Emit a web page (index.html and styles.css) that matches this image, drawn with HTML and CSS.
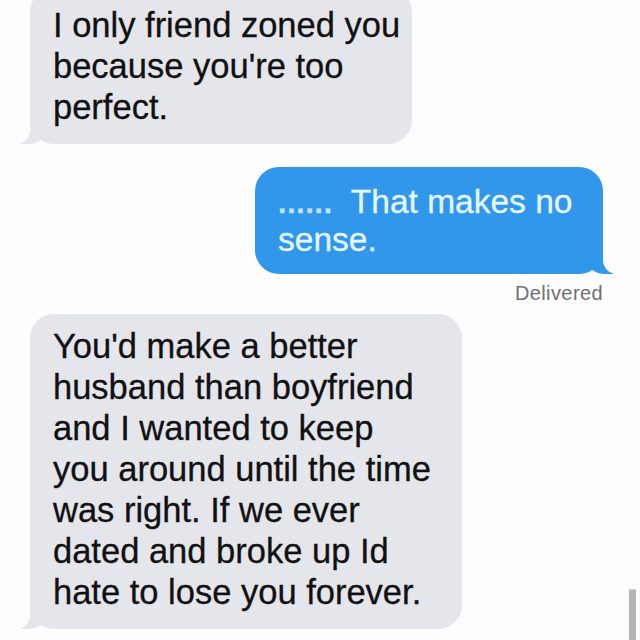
FILE: index.html
```html
<!DOCTYPE html>
<html lang="en">
<head>
<meta charset="utf-8">
<title>Messages</title>
<link rel="stylesheet" href="styles.css">
</head>
<body>
<div class="thread">
  <div class="bubble them first">I only friend zoned you because you're too perfect.</div>
  <div class="bubble me"><span class="dots">......</span><span class="msg">That makes no sense.</span></div>
  <div class="status">Delivered</div>
  <div class="bubble them wide">You'd make a better husband than boyfriend and I wanted to keep you around until the time was right. If we ever dated and broke up Id hate to lose you forever.</div>
</div>
<div class="scroll-mark"></div>
</body>
</html>
```
FILE: styles.css
```css
html, body {
  margin: 0;
  padding: 0;
}
body {
  width: 640px;
  height: 640px;
  overflow: hidden;
  background: #fdfdfd;
  font-family: "Liberation Sans", Arial, sans-serif;
  position: relative;
}
.thread {
  display: flex;
  flex-direction: column;
}
.bubble {
  position: relative;
  box-sizing: border-box;
  border-radius: 24px;
  -webkit-text-stroke: 0.3px currentColor;
}
.them {
  align-self: flex-start;
  margin-left: 30px;
  background: #e5e5ec;
  color: #111;
  font-size: 34.5px;
  line-height: 41px;
  padding: 12px 10px 15.5px 23px;
}
.them::before {
  content: "";
  position: absolute;
  bottom: 0;
  left: -10px;
  width: 28px;
  height: 28px;
  background: #e5e5ec;
  border-bottom-right-radius: 20px 18px;
}
.them::after {
  content: "";
  position: absolute;
  bottom: 0;
  left: -30px;
  width: 30px;
  height: 28px;
  background: #fdfdfd;
  border-bottom-right-radius: 14px;
}
.first {
  width: 382px;
  margin-top: -12px;
  padding-top: 17px;
}
.wide {
  width: 432px;
  margin-top: 11px;
  padding-right: 27px;
}
.me {
  align-self: flex-end;
  margin-right: 37px;
  margin-top: 23px;
  width: 348px;
  background: #3197eb;
  color: #e6f6ff;
  font-size: 33.5px;
  line-height: 37px;
  padding: 16px 18px 16.5px 23px;
}
.me::before {
  content: "";
  position: absolute;
  bottom: 0;
  right: -10px;
  width: 28px;
  height: 28px;
  background: #3197eb;
  border-bottom-left-radius: 20px 18px;
}
.me::after {
  content: "";
  position: absolute;
  bottom: 0;
  right: -30px;
  width: 30px;
  height: 28px;
  background: #fdfdfd;
  border-bottom-left-radius: 14px;
}
.dots {
  font-size: 30px;
  font-weight: bold;
  letter-spacing: 0.8px;
  margin-right: 18px;
  color: #c4e2fa;
}
.status {
  align-self: flex-end;
  margin-right: 37px;
  margin-top: 9px;
  font-size: 20px;
  line-height: 20px;
  letter-spacing: 0.4px;
  color: #707070;
}
.scroll-mark {
  position: absolute;
  left: 629px;
  top: 589px;
  width: 7px;
  height: 60px;
  background: #b4b4b4;
  border-top: 1px solid #d8d8d8;
}
```
